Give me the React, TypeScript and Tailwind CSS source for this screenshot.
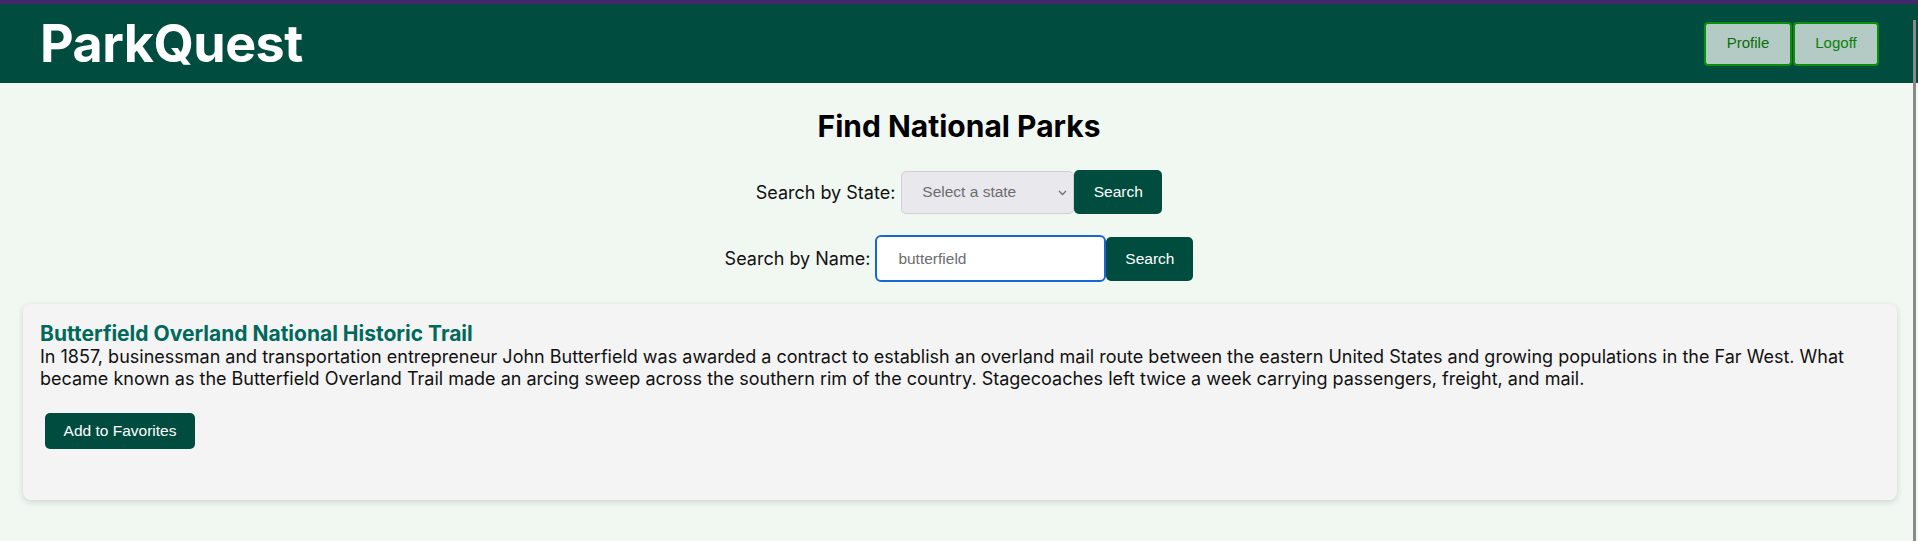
import React, { useState } from 'react';

const states = ["Alabama", "Alaska", "Arizona", "Arkansas", "California", "Colorado"];

interface Park {
    id: string;
    fullName: string;
    description: string;
}

const parks: Park[] = [
    {
        id: "butt",
        fullName: "Butterfield Overland National Historic Trail",
        description: "In 1857, businessman and transportation entrepreneur John Butterfield was awarded a contract to establish an overland mail route between the eastern United States and growing populations in the Far West. What became known as the Butterfield Overland Trail made an arcing sweep across the southern rim of the country. Stagecoaches left twice a week carrying passengers, freight, and mail.",
    },
];

export default function App() {
    const [state, setState] = useState("");
    const [name, setName] = useState("butterfield");

    const handleFavorite = (id: string) => {
        console.log("Add to favorites:", id);
    };

    return (
        <div className="min-h-[541px] bg-[#f1f8f1] font-['Inter',sans-serif] text-[#111]">
            <div className="h-[4px] bg-[#42286a]"></div>
            <header className="h-[79px] bg-[#004d40] flex items-center justify-between pl-[40px] pr-[39px]">
                <h1 className="text-white font-bold text-[52px] leading-none tracking-[-0.5px]">ParkQuest</h1>
                <div className="flex items-center gap-[1px] font-['Liberation_Sans',sans-serif] text-[15px]">
                    <button className="w-[88px] h-[44px] bg-[#b3cbc4] border-2 border-[#0a8f0a] rounded-[4px] text-[#0b6b0b]">
                        Profile
                    </button>
                    <button className="w-[86px] h-[44px] bg-[#b3cbc4] border-2 border-[#0a8f0a] rounded-[4px] text-[#0b800b]">
                        Logoff
                    </button>
                </div>
            </header>

            <main className="flex flex-col items-center">
                <h2 className="mt-[25px] text-[30px] font-bold leading-[36px] text-black">Find National Parks</h2>

                <div className="mt-[26px] flex items-center">
                    <label className="text-[18px] mr-[6px]">Search by State:</label>
                    <div className="relative">
                        <select
                            value={state}
                            onChange={e => setState(e.target.value)}
                            className="appearance-none w-[173px] h-[43px] bg-[#e9e8ed] border border-[#cfcfd4] rounded-[5px] pl-[20px] font-['Liberation_Sans',sans-serif] text-[15.5px] text-[#6d6d6d]">
                            <option value="">Select a state</option>
                            {states.map(s => (
                                <option key={s} value={s}>{s}</option>
                            ))}
                        </select>
                        <svg className="absolute right-[7px] top-[19px] pointer-events-none" width="9" height="6" viewBox="0 0 9 6" fill="none">
                            <path d="M1 1l3.5 3.5L8 1" stroke="#6d6d6d" strokeWidth="1.3" />
                        </svg>
                    </div>
                    <button className="w-[88px] h-[44px] bg-[#004d40] text-white rounded-[5px] font-['Liberation_Sans',sans-serif] text-[15.5px]">
                        Search
                    </button>
                </div>

                <div className="mt-[21px] flex items-center">
                    <label className="text-[18px] mr-[5px]">Search by Name:</label>
                    <input
                        value={name}
                        onChange={e => setName(e.target.value)}
                        className="w-[231px] h-[47px] bg-white border-2 border-[#1766d6] rounded-[6px] pl-[21px] font-['Liberation_Sans',sans-serif] text-[15.5px] text-[#6d6d6d] outline-none" />
                    <button className="w-[87px] h-[44px] bg-[#004d40] text-white rounded-[5px] font-['Liberation_Sans',sans-serif] text-[15.5px]">
                        Search
                    </button>
                </div>
            </main>

            <div className="mt-[22px] pl-[23px] pr-[21px]">
                {parks.map(park => (
                    <div key={park.id} className="bg-[#f4f4f4] rounded-[8px] shadow-[0_2px_6px_rgba(0,0,0,0.15)] pt-[18px] pl-[17px] pr-[16px] h-[196px]">
                        <h3 className="text-[21px] font-bold leading-[24px] text-[#00695c]">{park.fullName}</h3>
                        <p className="text-[18px] leading-[22px]">{park.description}</p>
                        <button
                            onClick={() => handleFavorite(park.id)}
                            className="mt-[23px] ml-[5px] w-[150px] h-[36px] bg-[#004d40] text-white rounded-[5px] font-['Liberation_Sans',sans-serif] text-[15.5px]">
                            Add to Favorites
                        </button>
                    </div>
                ))}
            </div>

            <div className="fixed right-[2px] top-[20px] bottom-0 w-[3px] bg-[#8a8a8a]"></div>
        </div>
    )
}
